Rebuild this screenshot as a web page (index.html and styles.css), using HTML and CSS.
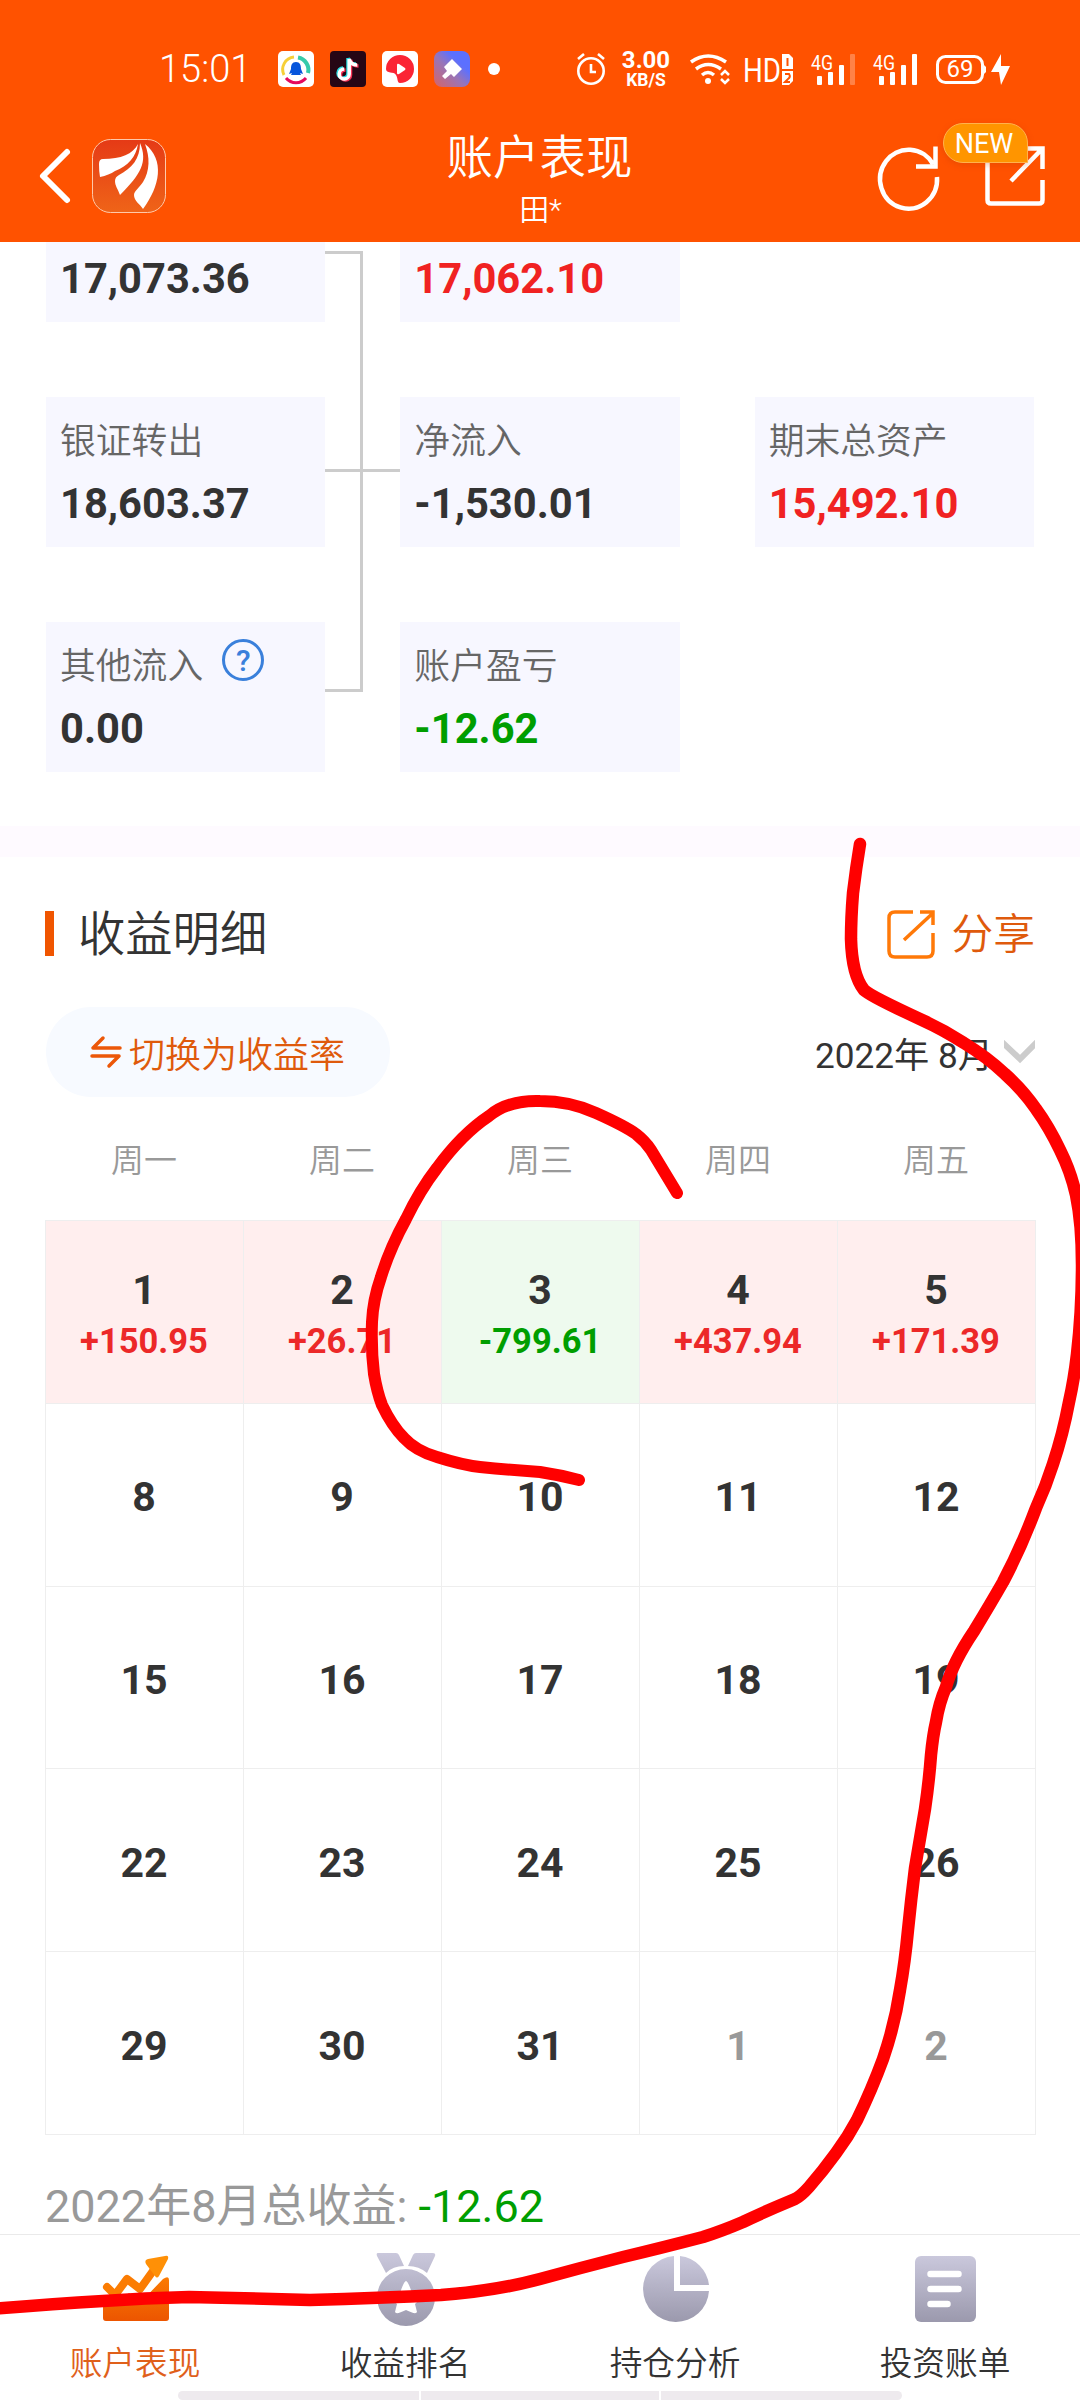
FILE: index.html
```html
<!DOCTYPE html>
<html lang="zh-CN">
<head>
<meta charset="utf-8">
<title>账户表现</title>
<link rel="stylesheet" href="styles.css">
</head>
<body>
<div class="app">
  <header class="header">
    <div class="status">
      <span class="time">15:01</span>
      <div class="apps">
        <svg width="36" height="36" viewBox="0 0 36 36"><rect width="36" height="36" rx="5" fill="#fff"/><g fill="none" stroke-width="3"><path d="M6 24A12.500 12.500 0 0 1 16 6" stroke="#f6cf37"/><path d="M20 6.500A12.500 12.500 0 0 1 30 22" stroke="#36cbaa" stroke-width="4"/><path d="M8 27A13 13 0 0 0 28 27" stroke="#e5095c"/></g><path d="M18 11c-4 0-5 3-5 7l-2 5 3-1-1 2h10l-1-2 3 1-2-5c0-4-1-7-5-7z" fill="#0755dc"/></svg>
        <svg width="36" height="36" viewBox="0 0 36 36"><rect width="36" height="36" rx="4" fill="#260615"/><g fill="none" stroke-width="3.500"><path d="M18 8v15a5 5 0 1 1-5-5M18 8c1 4 3 6 8 6" stroke="#27dbe0" transform="translate(0 -1)"/><path d="M18 8v15a5 5 0 1 1-5-5M18 8c1 4 3 6 8 6" stroke="#fa3156" transform="translate(2.500 1)"/><path d="M18 8v15a5 5 0 1 1-5-5M18 8c1 4 3 6 8 6" stroke="#fff" transform="translate(1.200 0)"/></g></svg>
        <svg width="36" height="36" viewBox="0 0 36 36"><rect width="36" height="36" rx="5" fill="#fff"/><path d="M4 18A14 14 0 1 1 18 32c-3 0-2-5-4-8-2-4-10-1-10-6z" fill="#fb2434"/><path d="M15 14v8q0 2 2 1l6-4q1-1 0-2l-6-4q-2-1-2 1z" fill="#fff"/></svg>
        <svg width="36" height="36" viewBox="0 0 36 36"><defs><linearGradient id="paint" x1="0" y1="1" x2="1" y2="0"><stop stop-color="#d76467"/><stop offset=".45" stop-color="#9875b8"/><stop offset=".7" stop-color="#5c70ff"/></linearGradient></defs><rect width="36" height="36" rx="8" fill="url(#paint)"/><path d="M18 8L28 18 20 26 17 23 11 28 8 25 13 20 10 16z" fill="#fff"/></svg>
        <i class="dot"></i>
      </div>
      <div class="system">
        <svg width="28" height="32" viewBox="0 0 28 32" fill="none" stroke="#fff" stroke-width="2.600"><circle cx="14" cy="18" r="12.700"/><path d="M14 11v8h5M1 6l6-5M27 6l-6-5"/></svg>
        <div class="speed"><b>3.00</b><b class="unit">KB/S</b></div>
        <svg class="wifi" width="39" height="31" viewBox="0 0 39 31" fill="none" stroke="#fff" stroke-width="3.500"><path d="M1 8Q18-4 36 8M6 15q12-9 25 0M12 21q6-5 12 0"/><circle cx="18" cy="27" r="3" fill="#fff" stroke="none"/><path d="M31 21l4-4 4 4M31 25l4 4 4-4" stroke-width="2.500"/></svg>
        <svg class="hd" width="48" height="31" viewBox="0 0 48 31"><text x="-2" y="28" textLength="38" lengthAdjust="spacingAndGlyphs" class="hd-text">HD</text><path d="M37 0h7l4 4v11H37zM37 17h11v10l-4 4h-7z" fill="#fff"/><path d="M42.500 4v8M40 20h4q2 3-1 5l-3 3h5" fill="none" stroke="#ff5200" stroke-width="2"/></svg>
        <svg class="signal" width="44" height="31" viewBox="0 0 44 31" fill="#fff"><text x="0" y="16" textLength="22" lengthAdjust="spacingAndGlyphs" class="sig-text">4G</text><rect x="6" y="22" width="5" height="9" rx="1"/><rect x="17" y="18" width="5" height="13" rx="1"/><rect x="28" y="11" width="5" height="20" rx="1"/><rect x="39" width="5" height="31" rx="1" opacity=".28"/></svg>
        <svg class="signal" width="44" height="31" viewBox="0 0 44 31" fill="#fff"><text x="0" y="16" textLength="22" lengthAdjust="spacingAndGlyphs" class="sig-text">4G</text><rect x="6" y="22" width="5" height="9" rx="1"/><rect x="17" y="18" width="5" height="13" rx="1"/><rect x="28" y="11" width="5" height="20" rx="1"/><rect x="39" width="5" height="31" rx="1"/></svg>
        <svg class="battery" width="50" height="29" viewBox="0 0 50 29"><rect x="1.500" y="1.500" width="45" height="26" rx="8" fill="none" stroke="#fff" stroke-width="3"/><path d="M47 9l3 3v5l-3 3z" fill="#fff"/><text x="24" y="22" text-anchor="middle" class="bat-text">69</text></svg>
        <svg class="bolt" width="19" height="31" viewBox="0 0 19 31"><path d="M10 0L0 18h8l2 13 9-19h-9z" fill="#fff"/></svg>
      </div>
    </div>
    <div class="titlebar">
      <div class="left">
        <svg width="32" height="56" viewBox="0 0 32 56" fill="none" stroke="#fff" stroke-width="6" stroke-linecap="round" stroke-linejoin="round"><path d="M29 4L5 28 29 52"/></svg>
        <svg width="74" height="74" viewBox="0 0 74 74"><defs><linearGradient id="logo" x2="0" y2="1"><stop stop-color="#e53a16"/><stop offset="1" stop-color="#ef6418"/></linearGradient></defs><rect x=".5" y=".5" width="73" height="73" rx="18" fill="url(#logo)" stroke="#ffc9aa"/><g fill="#fff"><path d="M46 5C41 15 29 20 11 20q-4 0-4 5 0 8 1 13 9-2 15-6C36 27 44 18 46 5z"/><path d="M48 4c8 19 1 31-20 52-2-6-5-9-5-14q0-4 4-6C40 29 48 20 48 4z"/><path d="M53 5c20 16 15 42-2 65-3-5-9-8-9-14 0-4 6-8 9-13C58 32 58 18 53 5z"/></g></svg>
      </div>
      <div class="title"><h1>账户表现</h1><p>田*</p></div>
      <div class="right">
        <svg width="64" height="64" viewBox="0 0 64 64" fill="none" stroke="#fff" stroke-width="4.500"><path d="M56 20A28.500 29.500 0 1 0 60 33M58.500 2.500v20H39"/></svg>
        <div class="share-top">
          <svg width="60" height="60" viewBox="0 0 60 60" fill="none" stroke="#fff" stroke-width="4.500"><path d="M2.500 10v44q0 3.500 3.500 3.500h48q3.500 0 3.500-3.500V34M42 2.500h15.500V23M57 3L26 35"/></svg>
          <span class="new">NEW</span>
        </div>
      </div>
    </div>
  </header>

  <main class="main">
    <section class="flow">
      <svg class="links" width="75" height="441" viewBox="0 0 75 441" fill="none" stroke="#ccc" stroke-width="3"><path d="M0 1.500H36.500V439.500H0M0 219.500H75"/></svg>
      <div class="card"><span></span><b>17,073.36</b></div>
      <div class="card up"><span></span><b>17,062.10</b></div>
      <i></i>
      <div class="card"><span>银证转出</span><b>18,603.37</b></div>
      <div class="card"><span>净流入</span><b>-1,530.01</b></div>
      <div class="card up"><span>期末总资产</span><b>15,492.10</b></div>
      <div class="card"><span class="withhelp">其他流入<em class="help">?</em></span><b>0.00</b></div>
      <div class="card down"><span>账户盈亏</span><b>-12.62</b></div>
    </section>
    <div class="band"></div>
    <section class="detail">
      <div class="heading">
        <h2><span>收益明细</span></h2>
        <div class="share"><svg width="49" height="49" viewBox="0 0 49 49" fill="none" stroke="#ff7908" stroke-width="3.500"><path d="M26 2H8Q2 2 2 8v33q0 6 6 6h32q6 0 6-6V23M33 2h13v13M46 3L17 30"/></svg><span>分享</span></div>
      </div>
      <div class="tools">
        <div class="switch"><svg width="32" height="32" viewBox="0 0 32 32" fill="none" stroke="#ec5708" stroke-width="3.500" stroke-linecap="round" stroke-linejoin="round"><path d="M30 12H3L13 2M2 20H29L19 30"/></svg>切换为收益率</div>
        <div class="month">2022年 8月<svg width="31" height="24" viewBox="0 0 31 24" fill="none" stroke="#ccc" stroke-width="6"><path d="M-2 2L16 19 33 2"/></svg></div>
      </div>
      <div class="week"><span>周一</span><span>周二</span><span>周三</span><span>周四</span><span>周五</span></div>
      <div class="calendar">
        <div class="day gain">1<small>+150.95</small></div><div class="day gain">2<small>+26.71</small></div><div class="day loss">3<small>-799.61</small></div><div class="day gain">4<small>+437.94</small></div><div class="day gain">5<small>+171.39</small></div>
        <div class="day">8</div><div class="day">9</div><div class="day">10</div><div class="day">11</div><div class="day">12</div>
        <div class="day">15</div><div class="day">16</div><div class="day">17</div><div class="day">18</div><div class="day">19</div>
        <div class="day">22</div><div class="day">23</div><div class="day">24</div><div class="day">25</div><div class="day">26</div>
        <div class="day">29</div><div class="day">30</div><div class="day">31</div><div class="day next">1</div><div class="day next">2</div>
      </div>
      <p class="total">2022年8月总收益: <span>-12.62</span></p>
    </section>
  </main>

  <nav class="nav">
    <div class="tabs">
    <div class="tab active"><svg width="68" height="74" viewBox="0 0 68 74"><defs><linearGradient id="or" x2="0" y2="1"><stop stop-color="#fb7a02"/><stop offset="1" stop-color="#ec5500"/></linearGradient><linearGradient id="gr" x2="0" y2="1"><stop stop-color="#cac8dc"/><stop offset="1" stop-color="#9b99ad"/></linearGradient></defs><path d="M5 35L13 43 25 27 38 37 56 12" fill="none" stroke="#fb7c02" stroke-width="8" stroke-linecap="round" stroke-linejoin="round"/><path d="M44 12q-2-4 2-5l17-3q4-1 3 3l-9 17q-2 3-4 0z" fill="#ff9006"/><path d="M1 46L13 53 27 41 38 51 61 27q6-4 6 1v38q0 3-3 3H4q-3 0-3-3z" fill="url(#or)"/></svg><span>账户表现</span></div>
    <div class="tab"><svg width="60" height="74" viewBox="0 0 60 74"><path d="M2 1h18q2 0 3 2l5 11Q17 14 10 21L1 4Q0 1 2 1zM40 1h17q3 0 2 3l-8 17q-8-7-19-7l5-11q1-2 3-2zM30 17a29 28.500 0 1 1 0 57 29 28.500 0 1 1 0-57zM30 29q-2 0-6 12l-12 2 9 9-2 8q1 3 11-2 10 5 11 2l-2-8 9-9-12-2q-4-12-6-12z" fill="url(#gr)" fill-rule="evenodd"/></svg><span>收益排名</span></div>
    <div class="tab"><svg width="68" height="74" viewBox="0 0 68 74"><path d="M32 4A33 33 0 1 0 67 39H32zM38 4A33 33 0 0 1 67 33H38z" fill="url(#gr)"/></svg><span>持仓分析</span></div>
    <div class="tab"><svg width="62" height="74" viewBox="0 0 62 74"><rect x="0" y="4" width="61" height="66" rx="6" fill="url(#gr)"/><path d="M15.500 22h28M15.500 37h28M15.500 52h17" stroke="#fff" stroke-width="6.500" stroke-linecap="round"/></svg><span>投资账单</span></div>
    </div>
    <div class="homebar"><i></i><i></i><i></i></div>
  </nav>
  <svg class="ink" width="1080" height="2400" viewBox="0 0 1080 2400" fill="none" stroke="#f00" stroke-width="12" stroke-linecap="round" stroke-linejoin="round">
    <path d="M677 1193L651 1150Q645 1141 636 1134Q625 1126 596 1113Q570 1101 540 1101Q508 1100 489 1116Q462 1134 437 1168Q420 1190 406 1219Q390 1248 381 1277Q373 1300 372 1322Q371 1350 374 1374Q377 1392 382 1405Q392 1426 404 1438Q416 1451 437 1457Q462 1465 480 1467Q510 1470 540 1472Q560 1475 579 1480"/>
    <path d="M860 844Q856 868 853 893Q851 918 851 939Q852 975 864 990Q870 996 922 1020Q944 1030 964 1043Q987 1057 1005 1074Q1023 1090 1036 1109Q1049 1127 1060 1150Q1071 1172 1076 1195Q1082 1224 1082 1265Q1082 1310 1077 1354Q1074 1380 1069 1402Q1063 1434 1053 1464Q1046 1486 1036 1508Q1021 1548 1003 1582Q991 1603 974 1631Q953 1662 946 1687Q939 1703 936 1722Q933 1735 931 1755Q929 1782 925 1809Q920 1838 915 1868Q911 1900 908 1930Q905 1962 900 1990Q895 2024 883 2059Q872 2089 857 2120Q848 2137 836 2153Q823 2171 809 2187Q801 2196 795 2199Q766 2211 743 2222Q722 2231 703 2237Q661 2248 623 2257Q580 2268 540 2279Q495 2291 441 2295Q380 2298 310 2300Q245 2298 189 2297Q145 2298 103 2301Q50 2304-8 2309" stroke-width="12.500"/>
  </svg>
</div>
</body>
</html>
```
FILE: styles.css
```css
* { box-sizing: border-box; }
body { margin: 0; background: #fff; color: #333; font-family: Roboto, "Noto Sans CJK SC", sans-serif; }
h1, h2, p { margin: 0; font-weight: 400; }
svg { display: block; flex: none; overflow: visible; }
.app { position: relative; display: flex; flex-direction: column; width: 1080px; height: 2400px; overflow: hidden; }

.header { flex: none; height: 242px; background: #ff5200; color: #fff; position: relative; z-index: 1; }
.status { display: flex; align-items: center; height: 109px; padding: 29px 70px 0 159px; }
.time { width: 119px; font-size: 38px; line-height: 40px; font-weight: 300; }
.apps { display: flex; align-items: center; gap: 16px; }
.dot { width: 12px; height: 12px; margin-left: 2px; border-radius: 50%; background: #fff; }
.system { display: flex; align-items: center; margin-left: auto; }
.speed { display: flex; flex-direction: column; align-items: center; width: 48px; margin-left: 17px; font-size: 24px; line-height: 22px; }
.speed .unit { font-size: 17.500px; line-height: 18px; }
.wifi { margin-left: 20px; }
.hd { margin-left: 16px; }
.signal { margin-left: 18px; }
.battery { margin-left: 19px; }
.bolt { margin-left: 5px; }
.hd-text { font-size: 34px; fill: #fff; }
.sig-text { font-size: 21px; }
.bat-text { font-size: 24px; fill: #fff; }

.titlebar { display: grid; grid-template-columns: 1fr auto 1fr; height: 133px; padding: 0 35px 0 38px; }
.left { display: flex; align-items: center; gap: 22px; }
.title { display: flex; flex-direction: column; align-items: center; margin-right: 4px; padding-top: 18px; text-align: center; }
.title h1 { font-size: 46.500px; line-height: 62px; font-weight: 350; }
.title p { padding-left: 2px; font-size: 30px; line-height: 42px; font-weight: 350; }
.right { display: flex; align-items: center; justify-content: flex-end; gap: 44px; }
.share-top { position: relative; }
.new { position: absolute; left: -42px; top: -23px; width: 85px; height: 40px; border: 1px solid #ffb24d; border-radius: 20px 20px 0 20px; background: #ff9500; font-size: 27px; line-height: 40px; padding-right: 3px; text-align: center; box-shadow: 0 2px 6px rgba(190, 60, 0, .3); }

.main { flex: 1; min-height: 0; overflow: hidden; }
.flow { position: relative; display: grid; grid-template-columns: repeat(3, 1fr); grid-auto-rows: 150px; gap: 75px; margin-top: -70px; padding: 0 46px; }
.links { position: absolute; left: 325px; top: 79px; }
.card { display: flex; flex-direction: column; padding: 23px 14px 0; background: #f7f7ff; }
.card span { height: 44px; color: #666; font-size: 35.800px; font-weight: 350; line-height: 44px; }
.card b { margin-top: 18px; font-size: 41.700px; line-height: 44px; }
.up b { color: #f02222; }
.down b { color: #009e00; }
.card .withhelp { display: flex; }
.help { width: 42px; height: 42px; margin: -6px 0 0 19px; border: 3px solid #3a80db; border-radius: 50%; color: #3a80db; font: 500 30px/37px Roboto, sans-serif; text-align: center; }
.band { height: 31px; margin-top: 54px; background: #fefaff; }

.detail { padding: 0 45px; }
.heading { display: flex; justify-content: space-between; align-items: center; height: 60px; margin-top: 46px; }
.heading h2 { display: flex; height: 45px; border-left: 9px solid #f05500; padding: 1px 0 0 24px; font-size: 47.300px; font-weight: 350; line-height: 46px; }
.share { display: flex; align-items: center; gap: 15px; color: #df5a0c; font-size: 41.800px; font-weight: 350; line-height: 60px; }
.share svg { margin-top: 2px; }
.share span { padding-top: 4px; }
.tools { display: flex; justify-content: space-between; align-items: center; margin-top: 44px; }
.switch { display: flex; align-items: center; gap: 7px; width: 344px; height: 90px; margin-left: 1px; padding-left: 44px; border-radius: 45px; background: #f7faff; color: #df5a0c; font-size: 36px; font-weight: 350; }
.month { display: flex; align-items: center; gap: 11px; font-size: 35.200px; }
.month svg { overflow: hidden; }
.week { display: grid; grid-template-columns: repeat(5, 1fr); margin-top: 39px; color: #999; font-size: 33px; font-weight: 350; line-height: 50px; text-align: center; }
.calendar { display: grid; grid-template-columns: repeat(5, 198px); grid-template-rows: repeat(5, 182.800px); margin-top: 34px; border-top: 1px solid #eee; border-left: 1px solid #eee; width: 991px; }
.day { display: flex; flex-direction: column; align-items: center; justify-content: center; padding: 5px 1px 0 0; border-right: 1px solid #eee; border-bottom: 1px solid #eee; font-size: 41px; font-weight: 700; line-height: 50px; }
.day small { font-size: 34.500px; line-height: 52px; }
.gain, .loss { padding-top: 8px; }
.gain { background: #ffeeee; }
.gain small { color: #ec2828; }
.loss { background: #eefaee; }
.loss small { color: #009e00; }
.next { color: #999; }
.total { margin-top: 43px; color: #999; font-size: 45px; line-height: 58px; white-space: pre; }
.total span { color: #009e00; }

.nav { display: flex; flex-direction: column; justify-content: space-between; flex: none; height: 166px; border-top: 1px solid #eaeaea; background: #fff; }
.tabs { display: grid; grid-template-columns: repeat(4, 1fr); }
.tab { display: flex; flex-direction: column; align-items: center; padding-top: 17px; font-size: 32.700px; font-weight: 350; line-height: 46px; }
.tab svg { margin-left: 1px; }
.tab span { margin-top: 15px; }
.active { color: #e0601a; }
.homebar { display: grid; grid-template-columns: 241px 238px 1fr; gap: 2px; height: 9px; width: 724px; margin: 0 auto; }
.homebar i { background: #eeeaee; }
.homebar i:first-child { border-radius: 6px 0 0 6px; }
.homebar i:last-child { border-radius: 0 6px 6px 0; }
.ink { position: absolute; inset: 0; z-index: 2; pointer-events: none; }
```
